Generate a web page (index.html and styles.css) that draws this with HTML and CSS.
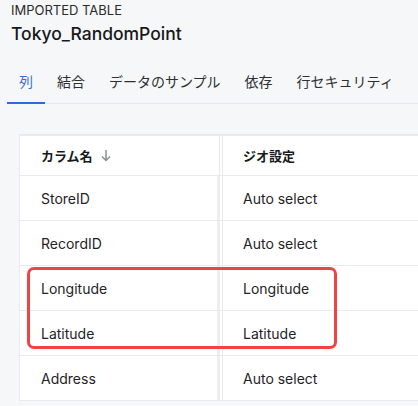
FILE: index.html
```html
<!DOCTYPE html>
<html lang="ja">
<head>
  <meta charset="UTF-8">
  <meta name="viewport" content="width=device-width, initial-scale=1.0">
  <title>Tokyo_RandomPoint | Imported table</title>
  <link rel="stylesheet" href="styles.css">
</head>
<body>
  <header class="page-head">
    <div class="kicker">IMPORTED TABLE</div>
    <h1>Tokyo_RandomPoint</h1>
  </header>

  <nav class="tabs">
    <a class="tab active">列</a>
    <a class="tab">結合</a>
    <a class="tab">データのサンプル</a>
    <a class="tab">依存</a>
    <a class="tab">行セキュリティ</a>
  </nav>

  <div class="grid-wrap">
    <div class="grid">
      <div class="row head">
        <div class="cell name">カラム名
          <svg class="sort" width="10" height="13" viewBox="0 0 10 13">
            <path d="M5 1v10M1 7.5l4 4 4-4" fill="none" stroke="currentColor" stroke-width="1.5"/>
          </svg>
        </div>
        <div class="cell geo">ジオ設定</div>
      </div>
      <div class="row">
        <div class="cell name">StoreID</div>
        <div class="cell geo">Auto select</div>
      </div>
      <div class="row">
        <div class="cell name">RecordID</div>
        <div class="cell geo">Auto select</div>
      </div>
      <div class="row">
        <div class="cell name">Longitude</div>
        <div class="cell geo">Longitude</div>
      </div>
      <div class="row">
        <div class="cell name">Latitude</div>
        <div class="cell geo">Latitude</div>
      </div>
      <div class="row">
        <div class="cell name">Address</div>
        <div class="cell geo">Auto select</div>
      </div>
    </div>
    <!-- highlight around the coordinate columns -->
    <div class="highlight"></div>
  </div>
</body>
</html>
```

FILE: styles.css
```css
body {
  margin: 0;
  background: #f6f7f9;
  color: #1f2328;
  font-family: Inter, "Noto Sans CJK JP", sans-serif;
  overflow: hidden;
}
.page-head {
  padding: 2px 11px 0;
}
.kicker {
  font-size: 13px;
  line-height: 16px;
  color: #2b2b2b;
}
.page-head h1 {
  margin: 5px 0 0;
  font-size: 17.5px;
  line-height: 22px;
  font-weight: 500;
  color: #16181c;
}
.tabs {
  display: flex;
  margin: 27px 0 0 7px;
  border-bottom: 1px solid #e6e8ec;
}
.tab {
  padding: 0 12px 10px;
  font-size: 14px;
  line-height: 20px;
  color: #2d2f33;
  white-space: nowrap;
  border-bottom: 2px solid transparent;
  margin-bottom: -1px;
}
.tab.active {
  color: #3a6ee0;
  border-bottom-color: #2b69e8;
}
.grid-wrap {
  position: relative;
  margin: 30px 0 0 19px;
}
.grid {
  background: #fff;
  border-top: 2px solid #e8eaee;
  border-left: 1px solid #e8eaee;
}
.row {
  display: flex;
  height: 44px;
  border-bottom: 1px solid #e8eaee;
}
.row.head {
  height: 39px;
  font-weight: 700;
  color: #17191c;
}
.cell {
  display: flex;
  align-items: center;
  font-size: 14px;
}
.row.head .cell {
  font-size: 13px;
}
.cell.name {
  width: 200px;
  padding-left: 21px;
  border-right: 3px solid #eceef2;
  box-sizing: border-box;
}
.row.head .cell.name {
  border-right: 1px solid #e8eaee;
}
.cell.geo {
  flex: 1;
  margin-left: 2px;
  padding-left: 20px;
  border-left: 1px solid #e8eaee;
}
.sort {
  margin-left: 8px;
  color: #8b9099;
}
.highlight {
  position: absolute;
  left: 8px;
  top: 133px;
  width: 304px;
  height: 76px;
  border: 3px solid #ef4444;
  border-radius: 7px;
}
```
